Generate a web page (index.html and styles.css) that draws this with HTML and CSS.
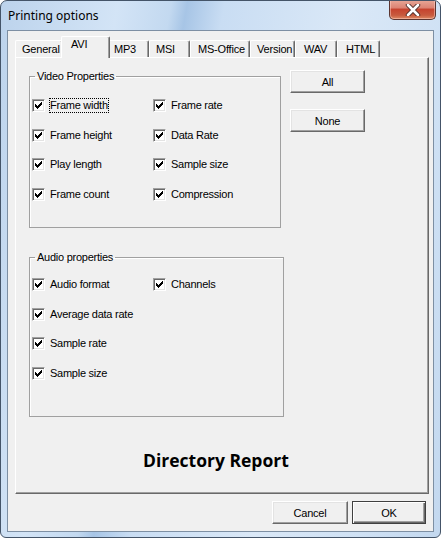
FILE: index.html
```html
<!DOCTYPE html>
<html>
<head>
<meta charset="utf-8">
<link rel="stylesheet" href="styles.css">
</head>
<body>
<div class="window">
  <div class="titlebar">
    <span class="title">Printing options</span>
    <div class="close">
      <svg width="16" height="12" viewBox="0 0 16 12"><path d="M3 1 L13 11 M13 1 L3 11" stroke="#4a2a26" stroke-width="4.4" stroke-linecap="round"/><path d="M3 1 L13 11 M13 1 L3 11" stroke="#fff" stroke-width="2.6" stroke-linecap="round"/></svg>
    </div>
  </div>
  <div class="client">
    <div class="tabs">
      <div class="tab w-general">General</div>
      <div class="tab sel w-avi">AVI</div>
      <div class="tab w-mp3">MP3</div>
      <div class="tab w-msi">MSI</div>
      <div class="tab w-office">MS-Office</div>
      <div class="tab w-version">Version</div>
      <div class="tab w-wav">WAV</div>
      <div class="tab w-html">HTML</div>
    </div>
    <div class="panel">
      <div class="top-row">
        <fieldset class="group video">
          <legend>Video Properties</legend>
          <div class="grid">
            <div class="item"><span class="cb"><svg width="11" height="11" viewBox="0 0 11 11" shape-rendering="crispEdges"><path d="M2 4h1v3H2z M3 5h1v3H3z M4 6h1v3H4z M5 5h1v3H5z M6 4h1v3H6z M7 3h1v3H7z M8 2h1v3H8z" fill="#000"/></svg></span><span class="lbl focus">Frame width</span></div>
            <div class="item"><span class="cb"><svg width="11" height="11" viewBox="0 0 11 11" shape-rendering="crispEdges"><path d="M2 4h1v3H2z M3 5h1v3H3z M4 6h1v3H4z M5 5h1v3H5z M6 4h1v3H6z M7 3h1v3H7z M8 2h1v3H8z" fill="#000"/></svg></span><span class="lbl">Frame rate</span></div>
            <div class="item"><span class="cb"><svg width="11" height="11" viewBox="0 0 11 11" shape-rendering="crispEdges"><path d="M2 4h1v3H2z M3 5h1v3H3z M4 6h1v3H4z M5 5h1v3H5z M6 4h1v3H6z M7 3h1v3H7z M8 2h1v3H8z" fill="#000"/></svg></span><span class="lbl">Frame height</span></div>
            <div class="item"><span class="cb"><svg width="11" height="11" viewBox="0 0 11 11" shape-rendering="crispEdges"><path d="M2 4h1v3H2z M3 5h1v3H3z M4 6h1v3H4z M5 5h1v3H5z M6 4h1v3H6z M7 3h1v3H7z M8 2h1v3H8z" fill="#000"/></svg></span><span class="lbl">Data Rate</span></div>
            <div class="item"><span class="cb"><svg width="11" height="11" viewBox="0 0 11 11" shape-rendering="crispEdges"><path d="M2 4h1v3H2z M3 5h1v3H3z M4 6h1v3H4z M5 5h1v3H5z M6 4h1v3H6z M7 3h1v3H7z M8 2h1v3H8z" fill="#000"/></svg></span><span class="lbl">Play length</span></div>
            <div class="item"><span class="cb"><svg width="11" height="11" viewBox="0 0 11 11" shape-rendering="crispEdges"><path d="M2 4h1v3H2z M3 5h1v3H3z M4 6h1v3H4z M5 5h1v3H5z M6 4h1v3H6z M7 3h1v3H7z M8 2h1v3H8z" fill="#000"/></svg></span><span class="lbl">Sample size</span></div>
            <div class="item"><span class="cb"><svg width="11" height="11" viewBox="0 0 11 11" shape-rendering="crispEdges"><path d="M2 4h1v3H2z M3 5h1v3H3z M4 6h1v3H4z M5 5h1v3H5z M6 4h1v3H6z M7 3h1v3H7z M8 2h1v3H8z" fill="#000"/></svg></span><span class="lbl">Frame count</span></div>
            <div class="item"><span class="cb"><svg width="11" height="11" viewBox="0 0 11 11" shape-rendering="crispEdges"><path d="M2 4h1v3H2z M3 5h1v3H3z M4 6h1v3H4z M5 5h1v3H5z M6 4h1v3H6z M7 3h1v3H7z M8 2h1v3H8z" fill="#000"/></svg></span><span class="lbl">Compression</span></div>
          </div>
        </fieldset>
        <div class="side-buttons">
          <div class="btn">All</div>
          <div class="btn">None</div>
        </div>
      </div>
      <fieldset class="group audio">
        <legend>Audio properties</legend>
        <div class="grid">
          <div class="item"><span class="cb"><svg width="11" height="11" viewBox="0 0 11 11" shape-rendering="crispEdges"><path d="M2 4h1v3H2z M3 5h1v3H3z M4 6h1v3H4z M5 5h1v3H5z M6 4h1v3H6z M7 3h1v3H7z M8 2h1v3H8z" fill="#000"/></svg></span><span class="lbl">Audio format</span></div>
          <div class="item"><span class="cb"><svg width="11" height="11" viewBox="0 0 11 11" shape-rendering="crispEdges"><path d="M2 4h1v3H2z M3 5h1v3H3z M4 6h1v3H4z M5 5h1v3H5z M6 4h1v3H6z M7 3h1v3H7z M8 2h1v3H8z" fill="#000"/></svg></span><span class="lbl">Channels</span></div>
          <div class="item span2"><span class="cb"><svg width="11" height="11" viewBox="0 0 11 11" shape-rendering="crispEdges"><path d="M2 4h1v3H2z M3 5h1v3H3z M4 6h1v3H4z M5 5h1v3H5z M6 4h1v3H6z M7 3h1v3H7z M8 2h1v3H8z" fill="#000"/></svg></span><span class="lbl">Average data rate</span></div>
          <div class="item span2"><span class="cb"><svg width="11" height="11" viewBox="0 0 11 11" shape-rendering="crispEdges"><path d="M2 4h1v3H2z M3 5h1v3H3z M4 6h1v3H4z M5 5h1v3H5z M6 4h1v3H6z M7 3h1v3H7z M8 2h1v3H8z" fill="#000"/></svg></span><span class="lbl">Sample rate</span></div>
          <div class="item span2"><span class="cb"><svg width="11" height="11" viewBox="0 0 11 11" shape-rendering="crispEdges"><path d="M2 4h1v3H2z M3 5h1v3H3z M4 6h1v3H4z M5 5h1v3H5z M6 4h1v3H6z M7 3h1v3H7z M8 2h1v3H8z" fill="#000"/></svg></span><span class="lbl">Sample size</span></div>
        </div>
      </fieldset>
      <div class="report">Directory Report</div>
    </div>
    <div class="footer">
      <div class="btn w-cancel">Cancel</div>
      <div class="btn default w-ok">OK</div>
    </div>
  </div>
</div>
</body>
</html>
```

FILE: styles.css
```css
html, body {
  margin: 0;
  padding: 0;
  background: #ffffff;
}

.window {
  box-sizing: border-box;
  width: 441px;
  height: 538px;
  border: 1px solid #445468;
  border-radius: 7px 7px 6px 6px;
  background: linear-gradient(100deg, #bcd3ec 0%, #d3e4f6 22%, #c3d9f0 32%, #a7c5e6 35%, #c9ddf3 42%, #dae8f7 65%, #cfe1f4 85%, #c3d8ef 100%);
  display: flex;
  flex-direction: column;
  overflow: hidden;
  font-family: "Liberation Sans", Arial, sans-serif;
  font-size: 11px;
  color: #000;
}

.titlebar {
  height: 29px;
  display: flex;
  align-items: flex-start;
  padding-left: 7px;
}

.title {
  font-family: "Noto Sans", "Open Sans", sans-serif;
  font-size: 12px;
  line-height: 16px;
  margin-top: 7px;
  color: #000;
}

.close {
  margin-left: auto;
  margin-right: 4px;
  margin-top: -1px;
  width: 47px;
  height: 20px;
  box-sizing: border-box;
  border: 1px solid #5b3530;
  border-top: none;
  border-radius: 0 0 5px 5px;
  background: linear-gradient(#e8a898 0%, #dc8474 40%, #c6442f 50%, #c85a3e 80%, #de8a64 100%);
  box-shadow: inset 0 0 0 1px rgba(255, 210, 200, 0.5);
  display: flex;
  align-items: center;
  justify-content: center;
}

.client {
  flex: 1;
  margin: 0 6px 5px 6px;
  border: 1px solid #7d8fa3;
  background: #f0f0f0;
  display: flex;
  flex-direction: column;
}

.tabs {
  display: flex;
  align-items: flex-end;
  margin: 6px 0 0 7px;
  height: 20px;
  position: relative;
  z-index: 1;
}

.tab {
  box-sizing: border-box;
  height: 17px;
  padding-left: 6px;
  line-height: 16px;
  border-top: 1px solid #ffffff;
  border-left: 1px solid #ffffff;
  border-right: 1px solid #696969;
  border-radius: 2px 2px 0 0;
  box-shadow: inset -1px 0 0 #a0a0a0;
  background: #f0f0f0;
  white-space: nowrap;
  letter-spacing: -0.2px;
}

.tab.sel {
  height: 22px;
  margin: 0 -2px -1px -2px;
  padding-left: 9px;
  line-height: 14px;
  position: relative;
  z-index: 2;
}

.w-general { width: 48px; }
.w-avi { width: 49px; }
.w-mp3 { width: 41px; padding-left: 5px; }
.w-msi { width: 41px; }
.w-office { width: 60px; padding-left: 7px; }
.w-version { width: 45px; }
.w-wav { width: 42px; padding-left: 8px; }
.w-html { width: 43px; padding-left: 8px; }

.panel {
  box-sizing: border-box;
  height: 437px;
  margin: 0 4px 0 7px;
  border-top: 1px solid #ffffff;
  border-left: 1px solid #ffffff;
  border-right: 1px solid #696969;
  border-bottom: 1px solid #696969;
  box-shadow: inset -1px -1px 0 #a0a0a0;
  display: flex;
  flex-direction: column;
}

.top-row {
  display: flex;
  align-items: flex-start;
  margin-top: 12px;
}

.group {
  margin: 0 0 0 13px;
  padding: 0;
  border: 1px solid #a0a0a0;
  box-shadow: inset 1px 1px 0 #ffffff;
  min-width: 0;
}

.group legend {
  margin-left: 5px;
  padding: 0 2px;
  line-height: 13px;
  letter-spacing: -0.25px;
}

.video {
  width: 252px;
  box-sizing: border-box;
}

.video .grid {
  padding: 8px 0 18px 2px;
}

.audio {
  width: 255px;
  box-sizing: border-box;
  margin-top: 23px;
}

.audio .grid {
  padding: 6px 0 28px 2px;
}

.grid {
  display: grid;
  grid-template-columns: 121px 1fr;
  grid-auto-rows: 29.5px;
  align-items: center;
}

.span2 {
  grid-column: 1 / 2;
}

.item {
  display: flex;
  align-items: center;
  gap: 5px;
}

.cb {
  box-sizing: border-box;
  width: 13px;
  height: 13px;
  border: 1px solid;
  border-color: #a0a0a0 #ffffff #ffffff #a0a0a0;
  box-shadow: inset 1px 1px 0 #696969, inset -1px -1px 0 #e3e3e3;
  background: #ffffff;
  display: flex;
  flex-shrink: 0;
}

.cb svg {
  display: block;
}

.lbl {
  line-height: 13px;
  letter-spacing: -0.25px;
  white-space: nowrap;
}

.focus {
  outline: 1px dotted #000;
  outline-offset: 0;
}

.side-buttons {
  display: flex;
  flex-direction: column;
  gap: 16px;
  margin-left: 9px;
}

.btn {
  box-sizing: border-box;
  width: 75px;
  height: 23px;
  border: 1px solid;
  border-color: #ffffff #696969 #696969 #ffffff;
  box-shadow: inset -1px -1px 0 #a0a0a0, inset 1px 1px 0 #e3e3e3;
  background: #f0f0f0;
  display: flex;
  align-items: center;
  justify-content: center;
  letter-spacing: -0.2px;
}

.report {
  margin-top: 32px;
  margin-left: 127px;
  font-family: "Open Sans", "Noto Sans", sans-serif;
  font-weight: 700;
  font-size: 17.5px;
  line-height: 23px;
  color: #000;
}

.footer {
  display: flex;
  justify-content: flex-end;
  gap: 4px;
  margin: 7px 7px 0 0;
}

.w-cancel { width: 76px; }
.w-ok { width: 74px; }

.btn.default {
  border-color: #404040;
  box-shadow: inset 1px 1px 0 #ffffff, inset -1px -1px 0 #696969, inset -2px -2px 0 #a0a0a0;
}
```
